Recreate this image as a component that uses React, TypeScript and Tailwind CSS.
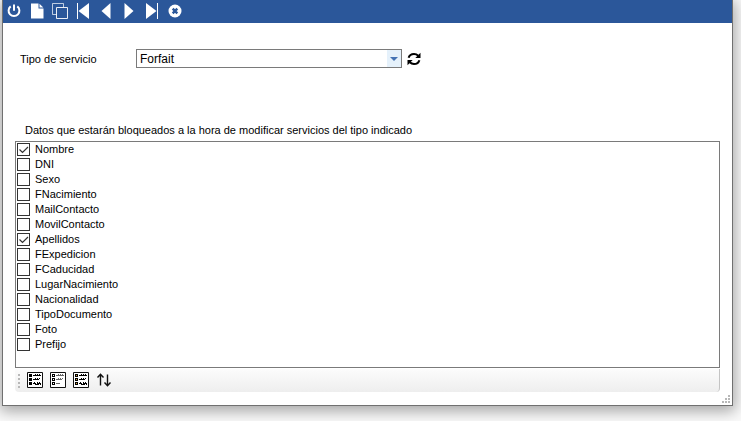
import { useState } from "react";
import type { ReactNode } from "react";

const FIELDS = [
  "Nombre",
  "DNI",
  "Sexo",
  "FNacimiento",
  "MailContacto",
  "MovilContacto",
  "Apellidos",
  "FExpedicion",
  "FCaducidad",
  "LugarNacimiento",
  "Nacionalidad",
  "TipoDocumento",
  "Foto",
  "Prefijo",
];

function PowerIcon() {
  return (
    <svg viewBox="0 0 16 16" className="size-4" fill="none" stroke="currentColor" strokeWidth="2">
      <path d="M8 1.5v6.3" />
      <path d="M4.7 3.4a5.4 5.4 0 1 0 6.6 0" />
    </svg>
  );
}

function PageIcon() {
  return (
    <svg viewBox="0 0 16 16" className="size-4" fill="currentColor">
      <path d="M2 0.5h7.500v5h5v10H2z" />
      <path d="M10.5 0.8l3.8 3.7h-3.8z" />
    </svg>
  );
}

function CopyIcon() {
  return (
    <svg viewBox="0 0 16 16" className="size-4" fill="none" stroke="currentColor">
      <path d="M4.5 11.5h-4v-11h11v4" opacity="0.7" />
      <path d="M4.5 4.5h11v11h-11z" opacity="0.9" />
    </svg>
  );
}

function FirstIcon() {
  return (
    <svg viewBox="0 0 16 16" className="size-4" fill="currentColor">
      <path d="M2 0h1v16h-1zM14 0v16L3.5 8z" />
    </svg>
  );
}

function PrevIcon() {
  return (
    <svg viewBox="0 0 16 16" className="size-4" fill="currentColor">
      <path d="M12.5 0v16L3.5 8z" />
    </svg>
  );
}

function NextIcon() {
  return (
    <svg viewBox="0 0 16 16" className="size-4" fill="currentColor">
      <path d="M3.5 0v16l9-8z" />
    </svg>
  );
}

function LastIcon() {
  return (
    <svg viewBox="0 0 16 16" className="size-4" fill="currentColor">
      <path d="M13 0h1v16h-1zM2 0v16l10.5-8z" />
    </svg>
  );
}

function CloseIcon() {
  return (
    <svg viewBox="0 0 16 16" className="size-4">
      <circle cx="8" cy="8" r="6.5" fill="currentColor" />
      <path d="M5.7 5.7l4.6 4.6M10.3 5.7l-4.6 4.6" stroke="#2b579a" strokeWidth="2.4" />
    </svg>
  );
}

function RefreshIcon() {
  return (
    <svg viewBox="0 0 14 14" className="size-[14px]">
      <path
        d="M1.6 5.8C2.3 3.4 4.4 2 7 2c1.7 0 3.1.6 4.2 1.7M12.4 8.2C11.7 10.6 9.6 12 7 12c-1.7 0-3.1-.6-4.2-1.7"
        fill="none"
        stroke="#000"
        strokeWidth="2"
      />
      <path d="M13.5.8v5.2H8.3zM.5 13.2V8h5.2z" />
    </svg>
  );
}

function ListIcon({ kind }: { kind: "all" | "none" | "invert" }) {
  const line = kind === "none" ? "#666" : "#000";
  const dot = kind === "invert" ? "#d9a23c" : "#fff";
  return (
    <svg viewBox="0 0 16 16" className="size-4">
      <path d="M.5.5h15v15H.5z" fill="#fff" stroke="#111" />
      {[2, 6, 10].map((y) => (
        <g key={y}>
          <path d={`M2 ${y}h3v3H2z`} fill="#000" />
          {kind !== "all" && <path d={`M3 ${y + 1}h1v1H3z`} fill={dot} />}
        </g>
      ))}
      <g fill={line}>
        <path d="M6 3h2v1H6zM8 2h1v2H8zM9 3h1v1H9zM10 2h1v2h-1zM11 3h1v1h-1zM12 2h1v2h-1zM13 3h1v1h-1z" />
        <path d="M6 7h2v1H6zM8 6h1v2H8zM9 7h1v1H9zM10 6h1v2h-1zM11 7h1v1h-1zM12 6h1v1h-1z" />
        {kind === "none" ? (
          <path d="M6 11h4v1H6z" />
        ) : (
          <path d="M6 11h1v1H6zM7 10h1v2H7zM8 11h1v2H8zM9 12h1v1H9zM10 10h1v3h-1zM11 11h1v2h-1zM12 10h1v2h-1zM13 11h1v2h-1z" />
        )}
      </g>
    </svg>
  );
}

function SortIcon() {
  return (
    <svg viewBox="0 0 16 16" className="size-4" fill="none" stroke="#111" strokeWidth="1.4">
      <path d="M4.5 13.5v-11M1.5 5.5l3-3.3 3 3.3M11.5 2.5v11M8.5 10.5l3 3.3 3-3.3" />
    </svg>
  );
}

function ToolButton({ label, children }: { label: string; children: ReactNode }) {
  return (
    <button type="button" aria-label={label} title={label} className="flex h-[22px] w-[23px] items-center pl-[3px]">
      {children}
    </button>
  );
}

function FieldRow({ name, checked, onToggle }: { name: string; checked: boolean; onToggle: () => void }) {
  return (
    <label className="flex h-[15px] items-center gap-[5px] text-[11px] leading-[15px]">
      <span className="grid size-[13px]">
        <input
          type="checkbox"
          checked={checked}
          onChange={onToggle}
          className="col-start-1 row-start-1 size-[13px] appearance-none border border-[#333] bg-white"
        />
        {checked && (
          <svg viewBox="0 0 13 13" className="pointer-events-none col-start-1 row-start-1 size-[13px]">
            <path d="M2.5 6.5l3 3 5.5-5.5" fill="none" stroke="#333" strokeWidth="1.2" />
          </svg>
        )}
      </span>
      {name}
    </label>
  );
}

export default function App() {
  const [blocked, setBlocked] = useState(["Nombre", "Apellidos"]);

  const toggle = (name: string) =>
    setBlocked((prev) => (prev.includes(name) ? prev.filter((n) => n !== name) : [...prev, name]));

  return (
    <div className="flex min-h-screen flex-col bg-[#fafafa] pr-2 pb-[15px] pl-[2px] font-['Liberation_Sans',sans-serif] text-black">
      <div className="flex flex-1 flex-col border border-t-0 border-[#707070] bg-white shadow-[0_3px_14px_2px_rgba(0,0,0,0.35)]">
        <header className="flex h-[23px] items-start bg-[#2b579a] text-white">
          <ToolButton label="Salir"><PowerIcon /></ToolButton>
          <ToolButton label="Nuevo"><PageIcon /></ToolButton>
          <ToolButton label="Duplicar"><CopyIcon /></ToolButton>
          <ToolButton label="Primero"><FirstIcon /></ToolButton>
          <ToolButton label="Anterior"><PrevIcon /></ToolButton>
          <ToolButton label="Siguiente"><NextIcon /></ToolButton>
          <ToolButton label="Último"><LastIcon /></ToolButton>
          <ToolButton label="Cancelar"><CloseIcon /></ToolButton>
        </header>

        <main className="flex flex-1 flex-col px-3 pt-[26px]">
          <div className="flex items-center pl-[5px]">
            <label htmlFor="tipo" className="w-[116px] text-[11px] leading-4">
              Tipo de servicio
            </label>
            <div className="grid h-[19px] w-[266px] border border-[#7a7a7a]">
              <select
                id="tipo"
                defaultValue="Forfait"
                className="col-start-1 row-start-1 appearance-none bg-white pt-[2px] pl-[3px] text-[12px] leading-[15px]"
              >
                <option>Forfait</option>
              </select>
              <span className="pointer-events-none col-start-1 row-start-1 flex w-[14px] items-center justify-center justify-self-end bg-[#e5f1fb]">
                <svg viewBox="0 0 8 4" className="h-1 w-2">
                  <path d="M0 0h8L4 4z" fill="#4472b4" />
                </svg>
              </span>
            </div>
            <button type="button" aria-label="Actualizar" className="ml-[5px]">
              <RefreshIcon />
            </button>
          </div>

          <h2 className="mt-[54px] pl-[10px] text-[11px] leading-4">
            Datos que estarán bloqueados a la hora de modificar servicios del tipo indicado
          </h2>

          <div className="mt-[3px] flex-1 border border-[#7a7a7a] bg-white pl-px">
            {FIELDS.map((name) => (
              <FieldRow key={name} name={name} checked={blocked.includes(name)} onToggle={() => toggle(name)} />
            ))}
          </div>

          <div className="mt-px flex h-[23px] items-start rounded-b-sm border-r border-[#c4c4c4] bg-linear-to-b from-[#fcfcfc] to-[#eeeeee] pl-[3px]">
            <svg viewBox="0 0 2 14" className="mr-px h-[14px] w-[2px] self-center" fill="#b8b8b8">
              <path d="M0 0h2v2H0zM0 4h2v2H0zM0 8h2v2H0zM0 12h2v2H0z" />
            </svg>
            <div className="flex pl-[3px]">
              <ToolButton label="Marcar todos"><ListIcon kind="all" /></ToolButton>
              <ToolButton label="Desmarcar todos"><ListIcon kind="none" /></ToolButton>
              <ToolButton label="Invertir selección"><ListIcon kind="invert" /></ToolButton>
              <ToolButton label="Ordenar"><SortIcon /></ToolButton>
            </div>
          </div>
        </main>

        <footer className="flex h-[13px] items-end justify-end pr-[2px] pb-[2px]">
          <svg viewBox="0 0 8 8" className="size-2" fill="#b8b8b8">
            <path d="M6 0h2v2H6zM3 3h2v2H3zM6 3h2v2H6zM0 6h2v2H0zM3 6h2v2H3zM6 6h2v2H6z" />
          </svg>
        </footer>
      </div>
    </div>
  );
}
